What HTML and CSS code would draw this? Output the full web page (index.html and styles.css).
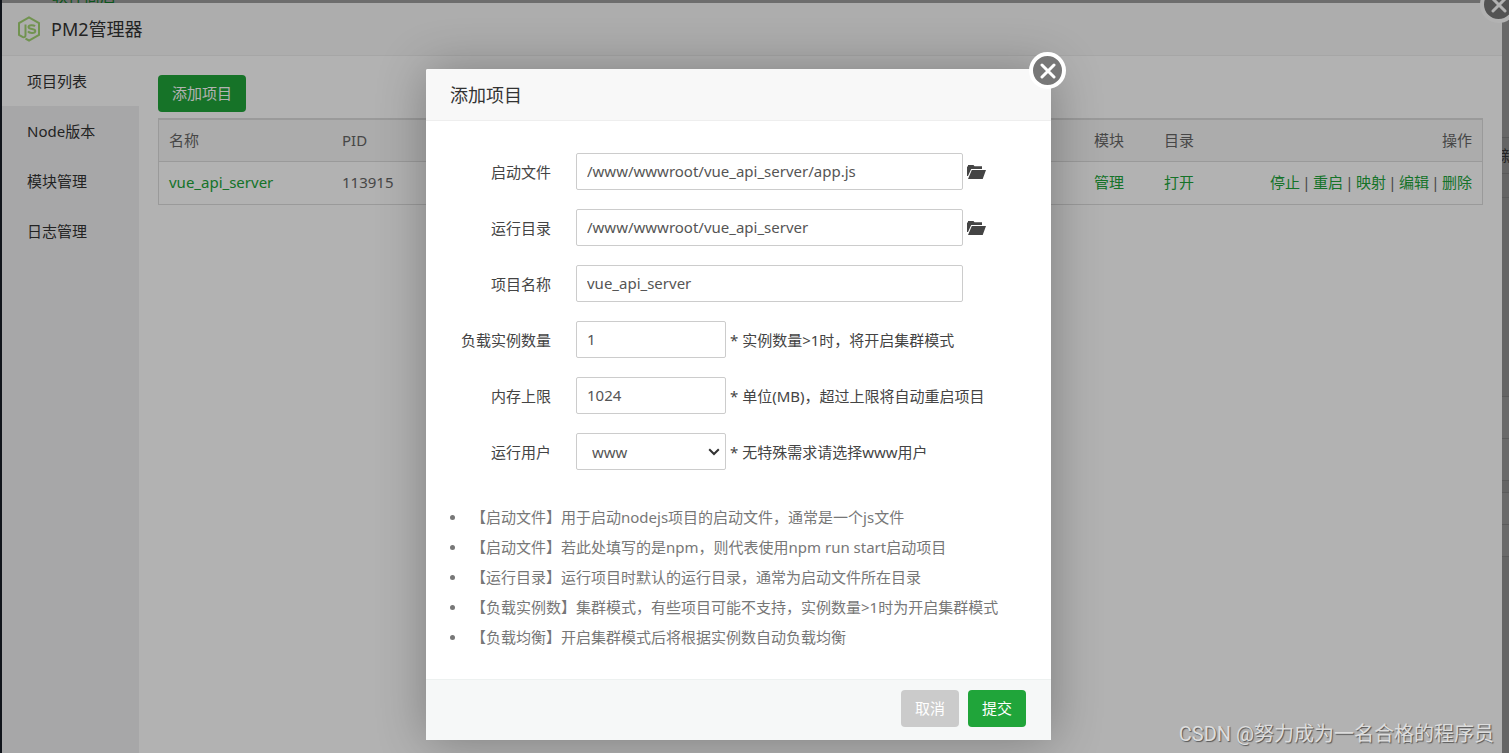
FILE: index.html
```html
<!DOCTYPE html>
<html lang="zh-CN">
<head>
<meta charset="utf-8">
<title>PM2管理器</title>
<link rel="stylesheet" href="styles.css">
</head>
<body>
<div class="app">
  <div class="backdrop">
    <span class="backdrop-tab">软件商店</span>
    <div class="backdrop-edge">
      <div class="edge-toolbar"></div>
      <div class="edge-cell">新</div>
      <div class="edge-row"></div>
      <div class="edge-space"></div>
      <div class="edge-line"></div>
      <div class="edge-line"></div>
      <div class="edge-gap"></div>
      <div class="edge-line short-line"></div>
      <div class="edge-line short-line"></div>
    </div>
  </div>

  <section class="window">
    <button class="close" type="button" aria-label="关闭窗口">
      <svg viewBox="0 0 16 16"><path d="M2 2 14 14M14 2 2 14"/></svg>
    </button>
    <header class="window-head">
      <svg class="logo" viewBox="0 0 24 26">
        <path d="M8.500 22.700 12 24.500l10-5.700V7.200L12 1.500 2 7.200v11.600l3.500 2c2 1 3 0 3-1.800V8.500"/>
        <path d="M18 10.200c-1.200-1.300-6.500-1.600-6.500.8 0 3 6.800 1 6.800 4 0 2.600-6 2.500-7.300.4"/>
      </svg>
      <h1>PM2管理器</h1>
    </header>
    <div class="window-body">
      <nav class="side">
        <a class="side-item active" href="#list">项目列表</a>
        <a class="side-item" href="#node">Node版本</a>
        <a class="side-item" href="#modules">模块管理</a>
        <a class="side-item" href="#logs">日志管理</a>
      </nav>
      <main class="content">
        <button class="btn" type="button">添加项目</button>
        <table class="projects">
          <colgroup><col class="col-name"><col><col class="col-module"><col class="col-dir"><col class="col-ops"></colgroup>
          <thead>
            <tr><th>名称</th><th>PID</th><th>模块</th><th>目录</th><th class="right">操作</th></tr>
          </thead>
          <tbody>
            <tr>
              <td><a href="#p">vue_api_server</a></td>
              <td>113915</td>
              <td><a href="#m">管理</a></td>
              <td><a href="#d">打开</a></td>
              <td>
                <div class="ops">
                  <a href="#stop">停止</a><span>|</span><a href="#restart">重启</a><span>|</span><a href="#map">映射</a><span>|</span><a href="#edit">编辑</a><span>|</span><a href="#del">删除</a>
                </div>
              </td>
            </tr>
          </tbody>
        </table>
      </main>
    </div>
  </section>

  <div class="overlay">
    <form class="dialog" role="dialog" aria-labelledby="dialog-title">
      <button class="close" type="button" aria-label="关闭">
        <svg viewBox="0 0 16 16"><path d="M2 2 14 14M14 2 2 14"/></svg>
      </button>
      <header class="dialog-head"><h2 id="dialog-title">添加项目</h2></header>
      <div class="dialog-body">
        <div class="field">
          <label for="file">启动文件</label>
          <input class="wide" id="file" type="text" value="/www/wwwroot/vue_api_server/app.js">
          <button class="pick" type="button" aria-label="选择文件">
            <svg viewBox="0 0 19 15"><path d="M0 12V2.500h1V1h5.500l1 1.200H15V5H4.200L1 12zM4.800 6H19l-3.300 9H1z"/></svg>
          </button>
        </div>
        <div class="field">
          <label for="dir">运行目录</label>
          <input class="wide" id="dir" type="text" value="/www/wwwroot/vue_api_server">
          <button class="pick" type="button" aria-label="选择目录">
            <svg viewBox="0 0 19 15"><path d="M0 12V2.500h1V1h5.500l1 1.200H15V5H4.200L1 12zM4.800 6H19l-3.300 9H1z"/></svg>
          </button>
        </div>
        <div class="field">
          <label for="name">项目名称</label>
          <input class="wide" id="name" type="text" value="vue_api_server">
        </div>
        <div class="field">
          <label for="count">负载实例数量</label>
          <input class="short" id="count" type="text" value="1">
          <span class="hint">* 实例数量&gt;1时，将开启集群模式</span>
        </div>
        <div class="field">
          <label for="memory">内存上限</label>
          <input class="short" id="memory" type="text" value="1024">
          <span class="hint">* 单位(MB)，超过上限将自动重启项目</span>
        </div>
        <div class="field">
          <label for="user">运行用户</label>
          <div class="select">
            <select class="short" id="user"><option>www</option></select>
            <svg viewBox="0 0 12 8"><path d="M1.200 1.200 6 6l4.800-4.800"/></svg>
          </div>
          <span class="hint">* 无特殊需求请选择www用户</span>
        </div>
        <ul class="notes">
          <li>【启动文件】用于启动nodejs项目的启动文件，通常是一个js文件</li>
          <li>【启动文件】若此处填写的是npm，则代表使用npm run start启动项目</li>
          <li>【运行目录】运行项目时默认的运行目录，通常为启动文件所在目录</li>
          <li>【负载实例数】集群模式，有些项目可能不支持，实例数量&gt;1时为开启集群模式</li>
          <li>【负载均衡】开启集群模式后将根据实例数自动负载均衡</li>
        </ul>
      </div>
      <footer class="dialog-foot">
        <button class="btn btn-cancel" type="button">取消</button>
        <button class="btn" type="submit">提交</button>
      </footer>
    </form>
  </div>

  <div class="watermark">CSDN @努力成为一名合格的程序员</div>
</div>
</body>
</html>
```
FILE: styles.css
```css
* { box-sizing: border-box; }

body {
  margin: 0;
  font: 15px/20px "Noto Sans", "Noto Sans CJK SC", sans-serif;
  color: #666;
}

h1, h2 { margin: 0; font-weight: 400; color: #333; }
a { color: #20a53a; text-decoration: none; }
button, input, select { font: inherit; }

.app {
  position: relative;
  display: flex;
  min-height: 100vh;
  overflow: hidden;
  padding: 3px 7px 0 2px;
}

/* page behind the window */
.backdrop {
  position: absolute;
  inset: 0;
  background: #9c9c9c;
  border-left: 2px solid #171d26;
}
.backdrop-tab {
  position: absolute;
  top: -13px;
  left: 50px;
  font-size: 16px;
  line-height: 18px;
  color: #0f7a26;
}
.backdrop-edge {
  position: absolute;
  top: 0;
  right: 0;
  bottom: 0;
  width: 16px;
  background: #919191;
  color: #333;
}
.edge-toolbar { height: 138px; border-bottom: 1px solid #808080; background: #959595; }
.edge-cell { height: 36px; padding-left: 8px; line-height: 34px; border-bottom: 1px solid #808080; overflow: hidden; }
.edge-row { height: 24px; border-bottom: 1px solid #838383; }
.edge-space { height: 199px; border-bottom: 1px solid #838383; }
.edge-line { height: 42px; border-bottom: 1px solid #838383; background: #989898; }
.edge-gap { height: 12px; border-bottom: 1px solid #838383; }
.edge-line.short-line { height: 32px; }

/* manager window */
.window {
  position: relative;
  flex: 1;
  display: flex;
  flex-direction: column;
  background: #fff;
}
.window-head {
  display: flex;
  align-items: center;
  gap: 10px;
  height: 53px;
  padding-left: 15px;
  background: #f8f8f8;
  border-bottom: 1px solid #eee;
}
.window-head h1 { font-size: 18px; line-height: 24px; }
.logo { width: 24px; height: 26px; fill: none; stroke: #a3d373; stroke-width: 2; }
.window-body { flex: 1; display: flex; }

.side { width: 137px; background: #f0f0f1; }
.side-item { display: block; padding-left: 25px; line-height: 50px; color: #333; }
.side-item.active { background: #fff; }

.content { flex: 1; padding: 19px; }

.btn {
  display: block;
  height: 37px;
  padding: 0 14px 2px;
  border: 0;
  border-radius: 4px;
  background: #20a53a;
  color: #fff;
}
.btn-cancel { background: #cbcbcb; }

.projects {
  width: 100%;
  margin-top: 6px;
  table-layout: fixed;
  border-collapse: separate;
  border-spacing: 0;
  border: 1px solid #ddd;
  border-top-width: 2px;
}
.projects th, .projects td { height: 42px; padding: 0 10px 2px; text-align: left; font-weight: 400; white-space: nowrap; }
.projects th { background: #f6f6f6; border-bottom: 1px solid #ddd; }
.projects .right { text-align: right; }
.ops { display: flex; justify-content: flex-end; gap: 4px; }
.ops span { display: flex; justify-content: center; width: 5px; }
.col-name { width: 173px; }
.col-module { width: 70px; }
.col-dir { width: 90px; }
.col-ops { width: 238px; }

/* round close button on the corner */
.close {
  position: absolute;
  top: -17px;
  right: -15px;
  display: grid;
  place-items: center;
  width: 37px;
  height: 37px;
  padding: 0;
  border: 4px solid #fff;
  border-radius: 50%;
  background: #777;
}
.close svg { width: 16px; height: 16px; fill: none; stroke: #fff; stroke-width: 3; stroke-linecap: round; }

/* dialog */
.overlay {
  position: absolute;
  inset: 0;
  display: flex;
  justify-content: center;
  align-items: flex-start;
  padding: 69px 32px 13px 0;
  background: rgba(0, 0, 0, .3);
}
.dialog {
  position: relative;
  width: 625px;
  background: #fff;
  border-radius: 2px;
  box-shadow: 1px 1px 50px rgba(0, 0, 0, .3);
}
.dialog-head { padding: 14px 24px 13px; background: #f8f8f8; border-bottom: 1px solid #eee; border-radius: 2px 2px 0 0; }
.dialog-head h2 { font-size: 18px; line-height: 24px; }
.dialog-body { padding: 32px 24px 27px; }

.field { display: flex; align-items: center; margin-bottom: 19px; color: #444; }
.field label { width: 101px; margin-right: 25px; text-align: right; }
.field input, .field select {
  height: 37px;
  padding: 0 10px 1px;
  border: 1px solid #ccc;
  border-radius: 2px;
  background: #fff;
  color: #555;
}
.field .wide { width: 387px; }
.field .short { width: 150px; }
.hint { margin-left: 4px; }

.pick { display: flex; margin-left: 4px; padding: 0; border: 0; background: none; }
.pick svg { width: 19px; height: 15px; fill: #444; }

.select { position: relative; display: flex; }
.field .select select { appearance: none; padding: 0 15px; }
.select svg {
  position: absolute;
  top: 15px;
  right: 6px;
  width: 12px;
  height: 8px;
  fill: none;
  stroke: #333;
  stroke-width: 2;
  pointer-events: none;
}

.notes { margin: 32px 0 0; padding: 0; list-style: none; line-height: 30px; color: #777; }
.notes li { display: flex; align-items: center; gap: 16px; white-space: nowrap; }
.notes li::before { content: ""; width: 5px; height: 5px; border-radius: 50%; background: #777; }

.dialog-foot {
  display: flex;
  justify-content: flex-end;
  gap: 9px;
  padding: 10px 25px 13px;
  background: #f6f8f8;
  border-top: 1px solid #edf1f0;
}

.watermark {
  position: absolute;
  right: 15px;
  bottom: 6px;
  font: 20px/26px Roboto, "Noto Sans CJK SC", sans-serif;
  color: #ddd;
  text-shadow: 1px 1px 1px #555;
}
```
